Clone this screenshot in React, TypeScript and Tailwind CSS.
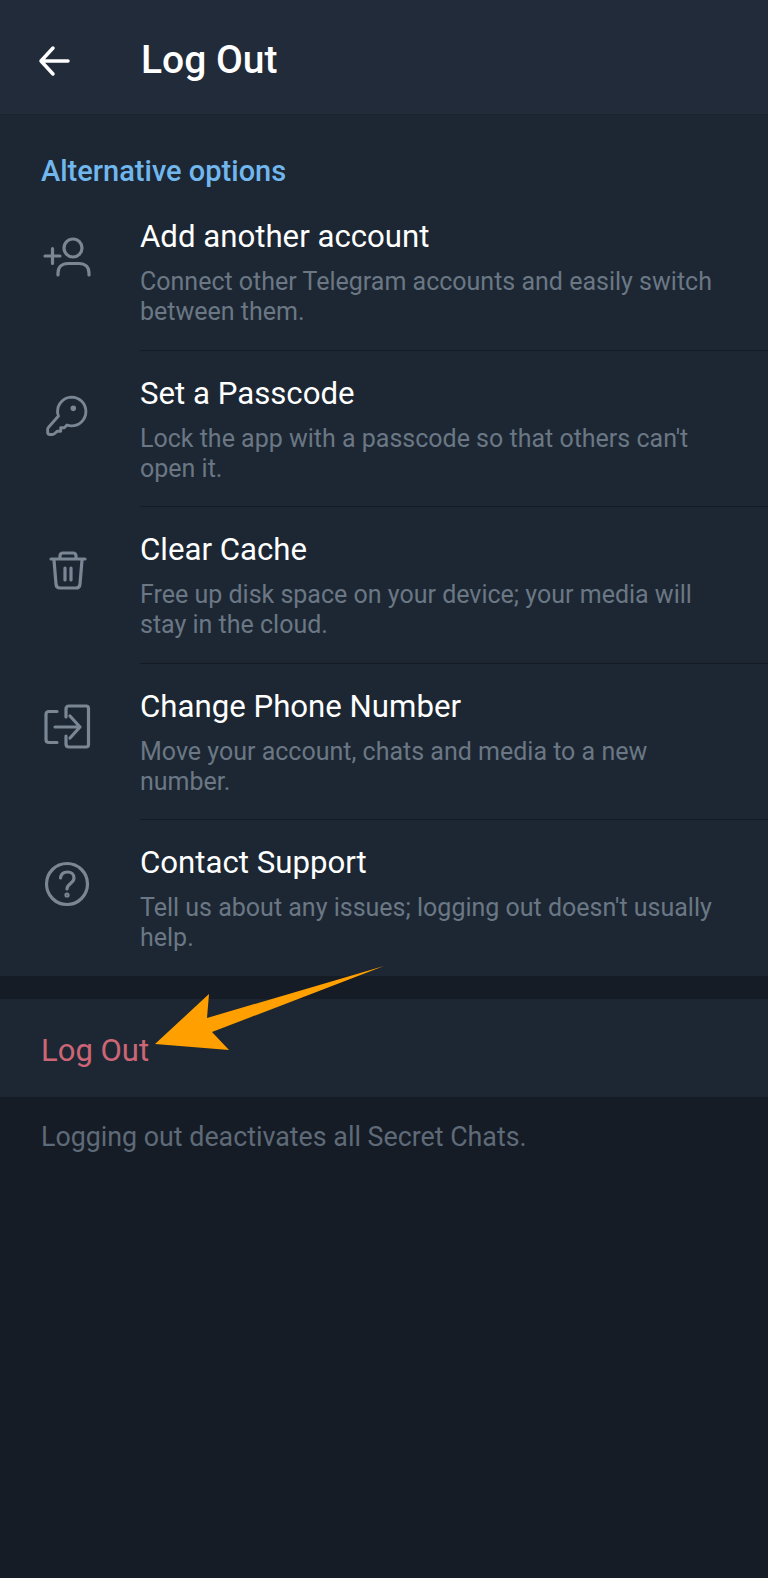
const rows = [
  {
    title: 'Add another account',
    text: 'Connect other Telegram accounts and easily switch between them.',
    icon: (
      <>
        <circle cx="72" cy="19" r="9" />
        <path d="M57 46v-2c0-6 4-9.500 10-9.500h11c6 0 10 3.500 10 9.500v2" />
        <path d="M44 27h15M51.500 19.500v15" />
      </>
    ),
  },
  {
    title: 'Set a Passcode',
    text: "Lock the app with a passcode so that others can't open it.",
    icon: (
      <g transform="translate(6.600 3) scale(0.9)">
        <path d="M71 9a16 16 0 0 1 0 32c-2 0-3.500-.3-5-1l-3 3h-4v4h-4l-2 2c-1 1-2 1.500-3 1.500h-3c-1.500 0-2.500-1-2.500-2.500v-3c0-1 .5-2 1-2.500L56.500 30c-.7-1.500-1-3-1-5A16 16 0 0 1 71 9z" />
        <circle cx="73" cy="21.500" r="1.500" />
      </g>
    ),
  },
  {
    title: 'Clear Cache',
    text: 'Free up disk space on your device; your media will stay in the cloud.',
    icon: (
      <>
        <path d="M50 17h34M59 17v-3c0-2 1-3 3-3h10c2 0 3 1 3 3v3" />
        <path d="M53 18l2 24c.2 2.500 1.500 4 4 4h16c2.500 0 3.800-1.500 4-4l2-24" />
        <path d="M64 26v12M70 26v12" />
      </>
    ),
  },
  {
    title: 'Change Phone Number',
    text: 'Move your account, chats and media to a new number.',
    icon: (
      <>
        <path d="M65 18v-8c0-2 1-3 3-3h17c1.500 0 2.500 1 2.500 2.500v36c0 1.500-1 2.500-2.500 2.500H68c-2 0-3-1-3-3v-8" />
        <path d="M56 12.500h-8c-2 0-3 1-3 3v25c0 2 1 3 3 3h8" />
        <path d="M54 28h25M69 17l10 11-10 11" />
      </>
    ),
  },
  {
    title: 'Contact Support',
    text: "Tell us about any issues; logging out doesn't usually help.",
    icon: (
      <>
        <circle cx="66" cy="29" r="20.500" />
        <path d="M59.500 23c.5-4 3.500-6 7-6 4 0 6.500 2.500 6.500 6 0 5.500-7 5.500-7 11" />
        <circle cx="66" cy="40" r="1" />
      </>
    ),
  },
];

const App = () => {
  return (
    <div className="relative flex h-[1578px] w-[768px] flex-col overflow-hidden bg-[#151c26] font-['Roboto',sans-serif]">
      <header className="flex h-[115px] items-center border-b border-[#1b232e] bg-[#222b39] pt-[7px]">
        <svg className="ml-[38px] shrink-0" width="32" height="32" viewBox="0 0 32 32" fill="none" stroke="#ffffff" strokeWidth="3.500" strokeLinecap="round" strokeLinejoin="round">
          <path d="M3 16h27M15 3 3 16l12 13" />
        </svg>
        <h1 className="ml-[71px] text-[39px] font-medium text-white">Log Out</h1>
      </header>

      <section className="bg-[#1c2733] pt-[38px]">
        <h2 className="pl-[41px] text-[29px] leading-[36px] font-medium text-[#71b7ee]">Alternative options</h2>
        <ul className="mt-[8px]">
          {rows.map((row, i) => (
            <li key={row.title} className="flex h-[156.5px] last:h-[153px]">
              <svg className="mt-[32px] ml-[1px] shrink-0" width="139" height="60" viewBox="0 0 139 60" fill="none" stroke="#7a8694" strokeWidth="3.200" strokeLinecap="round" strokeLinejoin="round">
                {row.icon}
              </svg>
              <div className={`h-[153.5px] flex-1 pt-[20px] ${i < rows.length - 1 ? 'border-b border-[#141b24]' : ''}`}>
                <div className="text-[31.200px] leading-[40px] text-white">{row.title}</div>
                <p className="mt-[10px] w-[590px] text-[25px] leading-[30px] text-[#6b7784]">{row.text}</p>
              </div>
            </li>
          ))}
        </ul>
      </section>

      <div className="mt-[23px] flex h-[98px] items-center bg-[#1c2733] pt-[6px] pl-[41px] text-[31px] text-[#cc6677]">Log Out</div>
      <p className="mt-[20px] pl-[41px] text-[26.800px] leading-[40px] text-[#5f6a78]">Logging out deactivates all Secret Chats.</p>

      {/* arrow drawn on top of the screenshot */}
      <svg className="absolute top-0 left-0" width="768" height="1578" viewBox="0 0 768 1578" fill="#ff9f00">
        <path d="M384 966 207 1018 209 994 155 1044 229 1050 212 1032z" />
      </svg>
    </div>
  );
};

export default App;
